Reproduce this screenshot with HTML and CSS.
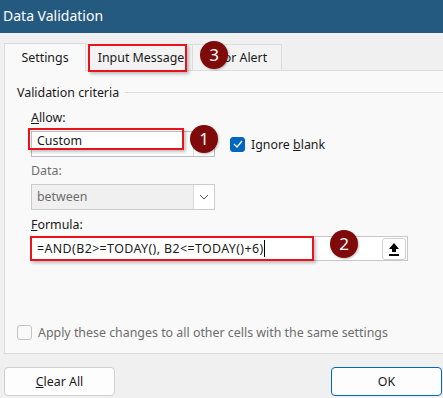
FILE: index.html
```html
<!DOCTYPE html>
<html lang="en">
<head>
  <meta charset="UTF-8">
  <title>Data Validation</title>
  <link rel="stylesheet" href="styles.css">
</head>
<body>
  <div class="dialog">
    <div class="titlebar">Data Validation</div>

    <div class="tabs">
      <div class="tab active">Settings</div>
      <div class="tab msg">Input Message</div>
      <div class="tab alert">Error Alert</div>
    </div>

    <div class="panel">
      <div class="legend"><span>Validation criteria</span></div>

      <div class="field">
        <div class="label first"><u>A</u>llow:</div>
        <div class="row">
          <div class="combo">
            <span class="value">Custom</span>
            <span class="drop"></span>
          </div>
          <label class="check">
            <span class="box on">
              <svg width="10" height="8" viewBox="0 0 10 8"><path d="M1 4 L4 7 L9 1" fill="none" stroke="#fff" stroke-width="1.3"/></svg>
            </span>
            <span>Ignore <u>b</u>lank</span>
          </label>
        </div>
      </div>

      <div class="field">
        <div class="label dim">Data:</div>
        <div class="combo disabled">
          <span class="value">between</span>
          <span class="drop">
            <svg width="10" height="6" viewBox="0 0 10 6"><path d="M1 1 L5 5 L9 1" fill="none" stroke="#555" stroke-width="1"/></svg>
          </span>
        </div>
      </div>

      <div class="field">
        <div class="label tight"><u>F</u>ormula:</div>
        <div class="formula">
          <span class="value">=AND(B2&gt;=TODAY(), B2&lt;=TODAY()+6)<span class="caret"></span></span>
          <span class="pick">
            <svg width="12" height="14" viewBox="0 0 12 14"><path d="M6 1 L11 7 L8 7 L8 10 L4 10 L4 7 L1 7 Z" fill="#000"/><rect x="1" y="12" width="10" height="2" fill="#000"/></svg>
          </span>
        </div>
      </div>

      <label class="check apply">
        <span class="box"></span>
        <span>Apply these changes to all other cells with the same settings</span>
      </label>
    </div>

    <div class="buttons">
      <button class="btn"><u>C</u>lear All</button>
      <button class="btn primary">OK</button>
    </div>

    <!-- annotations -->
    <div class="mark mark-msg"></div>
    <div class="mark mark-allow"></div>
    <div class="mark mark-formula"></div>
    <div class="badge b1">1</div>
    <div class="badge b2">2</div>
    <div class="badge b3">3</div>
  </div>
</body>
</html>
```

FILE: styles.css
```css
body {
  margin: 0;
  background-color: #f0f0f0;
  font-family: "Noto Sans", "Open Sans", sans-serif;
  font-size: 12.4px;
  color: #1a1a1a;
}
.dialog {
  position: relative;
  width: 443px;
  height: 398px;
  overflow: hidden;
}
.titlebar {
  height: 33px;
  line-height: 31px;
  padding-left: 3px;
  background-color: #245a80;
  color: #ffffff;
  font-size: 14px;
}
.tabs {
  display: flex;
  align-items: flex-end;
  height: 37px;
  padding-left: 4px;
}
.tab {
  height: 26px;
  line-height: 25px;
  text-align: center;
  background-color: #f3f3f3;
  border: 1px solid #dcdcdc;
  border-bottom: none;
  box-sizing: border-box;
}
.tab.active {
  width: 82px;
  height: 28px;
  line-height: 27px;
  background-color: #f9f9f9;
  margin-bottom: -1px;
  position: relative;
  z-index: 1;
}
.tab.msg {
  width: 107px;
  border-left: none;
  padding-left: 4px;
}
.tab.alert {
  width: 89px;
  border-left: none;
}
.panel {
  margin-left: 4px;
  height: 284px;
  box-sizing: border-box;
  background-color: #f9f9f9;
  border: 1px solid #dcdcdc;
  border-right: none;
  padding: 13px 0 0 12px;
}
.legend {
  display: flex;
  align-items: center;
  gap: 6px;
  height: 16px;
}
.legend::after {
  content: "";
  flex: 1;
  border-top: 1px solid #dcdcdc;
}
.field {
  padding-left: 14px;
}
.label {
  height: 16px;
  line-height: 16px;
  margin-top: 6px;
  margin-bottom: 5px;
}
.label.first {
  margin-top: 10px;
}
.label.tight {
  margin-top: 7px;
  margin-bottom: 3px;
}
.dim {
  color: #6d6d6d;
}
.row {
  display: flex;
  align-items: center;
}
.combo {
  display: flex;
  width: 184px;
  height: 26px;
  box-sizing: border-box;
  border: 1px solid #bdbdbd;
  background-color: #ffffff;
}
.combo .value {
  flex: 1;
  line-height: 24px;
  padding-left: 5px;
}
.row .combo .value {
  line-height: 18px;
}
.combo .drop {
  width: 20px;
  border-left: 1px solid #dcdcdc;
  background-color: #ffffff;
  display: flex;
  align-items: center;
  justify-content: center;
}
.combo.disabled {
  background-color: #f0f0f0;
  border-color: #cccccc;
  color: #6d6d6d;
}
.check {
  display: flex;
  align-items: center;
  gap: 6px;
  margin-left: 15px;
}
.box {
  width: 15px;
  height: 15px;
  box-sizing: border-box;
  border: 1px solid #c3c3c3;
  border-radius: 3px;
  display: flex;
  align-items: center;
  justify-content: center;
}
.box.on {
  background-color: #0067c0;
  border-color: #0067c0;
}
.formula {
  display: flex;
  align-items: center;
  width: 377px;
  height: 25px;
  box-sizing: border-box;
  border: 1px solid #c8c8c8;
  background-color: #ffffff;
}
.formula .value {
  flex: 1;
  padding-left: 5px;
  letter-spacing: 0.4px;
}
.caret {
  display: inline-block;
  width: 1px;
  height: 17px;
  background-color: #000;
  vertical-align: -4px;
}
.pick {
  width: 24px;
  height: 22px;
  margin-right: 1px;
  box-sizing: border-box;
  border: 1px solid #d0d0d0;
  border-radius: 3px;
  display: flex;
  align-items: center;
  justify-content: center;
}
.apply {
  margin-left: 0;
  margin-top: 63px;
  color: #6d6d6d;
}
.buttons {
  display: flex;
  justify-content: space-between;
  padding: 13px 1px 0 4px;
}
.btn {
  width: 111px;
  height: 29px;
  font-family: inherit;
  font-size: 12.4px;
  color: #1a1a1a;
  background-color: #fdfdfd;
  border: 1px solid #d0d0d0;
  border-radius: 4px;
}
.btn.primary {
  border-color: #0067c0;
}
.mark {
  position: absolute;
  border: 2px solid #e8141b;
  box-shadow: 2px 2px 3px rgba(0, 0, 0, 0.25);
}
.mark-msg {
  left: 88px;
  top: 44px;
  width: 95px;
  height: 24px;
}
.mark-allow {
  left: 28px;
  top: 128px;
  width: 152px;
  height: 18px;
}
.mark-formula {
  left: 30px;
  top: 236px;
  width: 280px;
  height: 21px;
}
.badge {
  position: absolute;
  width: 28px;
  height: 28px;
  border-radius: 50%;
  background-color: #7f0a0a;
  color: #ffffff;
  font-size: 17px;
  line-height: 28px;
  text-align: center;
  box-shadow: 1px 1px 2px rgba(0, 0, 0, 0.25);
}
.b1 {
  left: 190px;
  top: 125px;
}
.b2 {
  left: 330px;
  top: 230px;
}
.b3 {
  left: 200px;
  top: 41px;
}
```
